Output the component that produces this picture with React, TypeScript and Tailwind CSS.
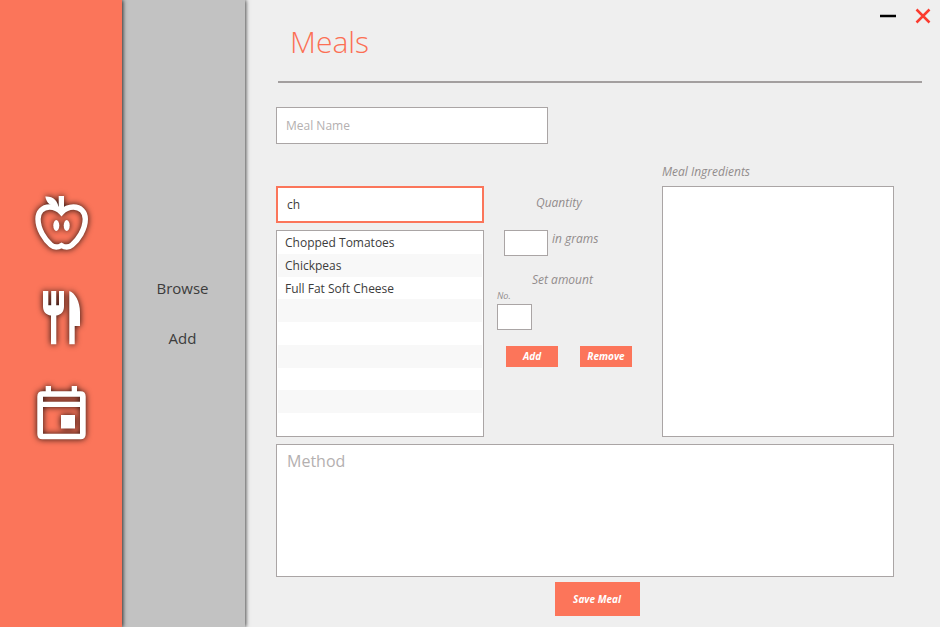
import { useState } from "react";

const results = ["Chopped Tomatoes", "Chickpeas", "Full Fat Soft Cheese", "", "", "", "", "", ""];

const field = "block border border-[#aaa5a5] bg-white outline-none";
const caption = "block text-[12px] italic leading-[18px] text-[#928c8c]";
const action = "bg-[#fc755a] font-bold italic text-white";
const iconStyle =
  "h-14 w-14 overflow-visible fill-white drop-shadow-[0_0_3px_rgba(0,0,0,0.9)]";

function AppleIcon() {
  return (
    <svg viewBox="0 0 56 56" className={iconStyle} aria-hidden="true">
      <path
        d="M28.5 16.5C25 12.5 21 11 16.5 11C9.5 11 5 16 5 23C5 33.5 12 44 18 49C21.5 52 25 51.5 28.5 49.5C32 51.5 35.5 52 39 49C45 44 52.3 33.5 52.3 23C52.3 16 47.5 11 40.5 11C36 11 32 12.5 28.5 16.5Z"
        fill="none"
        stroke="white"
        strokeWidth="5.4"
      />
      <path d="M25.7 0H31V17H25.7Z" />
      <path d="M12.3 0.5C20 0 25 4.5 26 13L22 11C17 9 13.5 7 12.3 0.5Z" />
      <ellipse cx="23.3" cy="29.5" rx="3" ry="5.4" />
      <ellipse cx="33.7" cy="29.5" rx="3" ry="5.4" />
    </svg>
  );
}

function CutleryIcon() {
  return (
    <svg viewBox="0 0 56 56" className={iconStyle} aria-hidden="true">
      <path d="M10 0H15.3V14.3H18.2V0H23.2V14.3H26V0H31V15.5C31 20.5 28 24 23.3 24.5V53.3H18V24.5C13 24 10 20.5 10 15.5Z" />
      <path d="M36.3 0C42 1.5 47 11 47 21V35H41.7V53.3H36.3Z" />
    </svg>
  );
}

function CalendarIcon() {
  return (
    <svg viewBox="0 0 56 56" className={iconStyle} aria-hidden="true">
      <path
        fillRule="evenodd"
        d="M12.7 0H18V5.3H38.7V0H44V5.3H47.5Q52.7 5.3 52.7 10.5V48Q52.7 53.3 47.5 53.3H9.5Q4.3 53.3 4.3 48V10.5Q4.3 5.3 9.5 5.3H12.7ZM10 10.7V15.7H47V10.7ZM10 21V47.7H47V21Z"
      />
      <path d="M28 29H42V42.5H28Z" />
    </svg>
  );
}

export default function App() {
  const [mealName, setMealName] = useState("");
  const [search, setSearch] = useState("ch");

  return (
    <div className="flex min-h-screen bg-[#efefef] font-['Open_Sans','Noto_Sans',sans-serif] text-[#3c3c3c]">
      <nav
        aria-label="Sections"
        className="z-20 flex w-[122px] shrink-0 flex-col items-center justify-center gap-[39px] bg-[#fb755a] pt-[11px] shadow-[1px_0_4px_rgba(0,0,0,0.8)]"
      >
        <button aria-label="Ingredients"><AppleIcon /></button>
        <button aria-label="Meals"><CutleryIcon /></button>
        <button aria-label="Planner"><CalendarIcon /></button>
      </nav>

      <nav
        aria-label="Meals"
        className="z-10 flex w-[123px] shrink-0 flex-col items-center justify-center gap-[26px] bg-[#c2c2c2] pb-0.5 pr-0.5 text-[15px] leading-6 shadow-[1px_0_4px_rgba(0,0,0,0.7)]"
      >
        <button>Browse</button>
        <button>Add</button>
      </nav>

      <main className="min-w-0 flex-1 pl-[31px]">
        <header className="ml-0.5 mr-[18px] flex h-[83px] items-start justify-between border-b-2 border-[#a39f9f]">
          <h1 className="pl-3 pt-[22px] text-[30px] font-light leading-10 text-[#fc6f54]">Meals</h1>
          <div className="-mr-[9px] flex gap-[18px] pt-2">
            <button aria-label="Minimize">
              <svg viewBox="0 0 18 16" className="h-4 w-[18px]" aria-hidden="true">
                <path d="M1 8H17" stroke="black" strokeWidth="2.5" />
              </svg>
            </button>
            <button aria-label="Close">
              <svg viewBox="0 0 16 16" className="h-4 w-4" aria-hidden="true">
                <path d="M1.5 1.5L14.5 14.5M14.5 1.5L1.5 14.5" stroke="#fb3b2f" strokeWidth="2.5" />
              </svg>
            </button>
          </div>
        </header>

        <form className="mr-[46px] pt-6" onSubmit={(e) => e.preventDefault()}>
          <input
            aria-label="Meal name"
            placeholder="Meal Name"
            value={mealName}
            onChange={(e) => setMealName(e.target.value)}
            className={`${field} h-[37px] w-[272px] px-[9px] text-[12px] placeholder:text-[#b4b0b0]`}
          />

          <div className="mt-[18px] grid grid-cols-[208fr_178px_232fr]">
            <div className="pt-6">
              <input
                aria-label="Search ingredients"
                value={search}
                onChange={(e) => setSearch(e.target.value)}
                className="block h-[37px] w-full border-2 border-[#fb755a] bg-white px-[9px] text-[12px] outline-none"
              />
              <ul aria-label="Search results" className={`${field} mt-[7px] flex h-[207px] flex-col px-px`}>
                {results.map((name, i) => (
                  <li key={i} className="flex flex-1 items-center px-[7px] pt-0.5 text-[12px] leading-[18px] even:bg-[#f8f8f8]">
                    {name}
                  </li>
                ))}
              </ul>
            </div>

            <div className="pl-[13px] pt-8">
              <label htmlFor="grams" className={`${caption} pl-[39px]`}>Quantity</label>
              <div className="mt-[18px] flex gap-1 pl-[7px]">
                <input id="grams" className={`${field} h-[26px] w-11 px-1 text-[12px]`} />
                <span className={caption}>in grams</span>
              </div>
              <span className={`${caption} mt-[15px] pl-[35px]`}>Set amount</span>
              <label htmlFor="count" className="mt-px block text-[9px] italic leading-[12px] text-[#928c8c]">No.</label>
              <input id="count" className={`${field} mt-0.5 h-[26px] w-[35px] px-1 text-[12px]`} />
              <div className="mt-4 flex gap-[22px] pl-[9px]">
                <button type="button" className={`${action} h-[21px] w-[52px] text-[10px]`}>Add</button>
                <button type="button" className={`${action} h-[21px] w-[52px] text-[10px]`}>Remove</button>
              </div>
            </div>

            <div className="flex flex-col pt-px">
              <h2 id="ingredients-title" className={caption}>Meal Ingredients</h2>
              <ul aria-labelledby="ingredients-title" className={`${field} mt-[5px] flex-1`} />
            </div>
          </div>

          <textarea
            aria-label="Method"
            placeholder="Method"
            className={`${field} mt-[7px] h-[133px] w-full resize-none px-2.5 py-1 text-[16px] leading-6 placeholder:text-[#b4b0b0]`}
          />
          <div className="mt-[5px] flex justify-center pl-6">
            <button type="submit" className={`${action} h-[34px] w-[85px] text-[10px]`}>Save Meal</button>
          </div>
        </form>
      </main>
    </div>
  );
}
